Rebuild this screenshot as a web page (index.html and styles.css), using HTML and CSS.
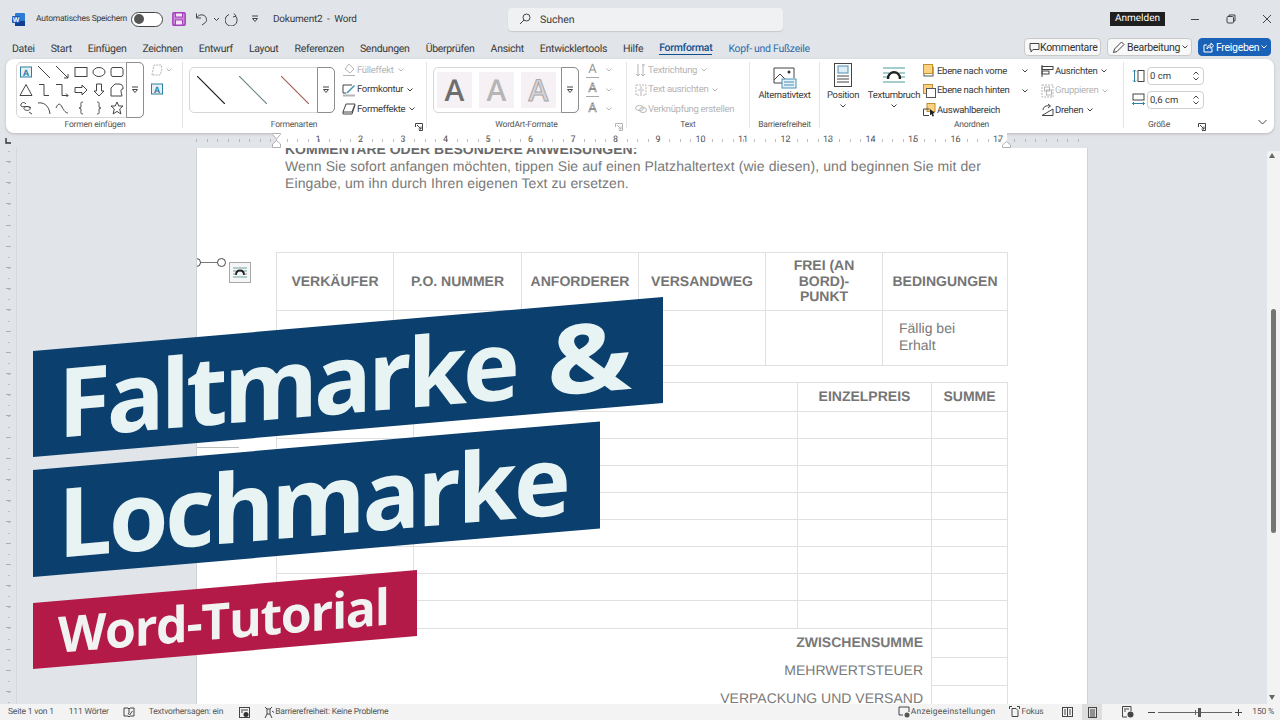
FILE: index.html
```html
<!DOCTYPE html>
<html lang="de">
<head>
    <meta charset="UTF-8">
    <title>Dokument2 - Word</title>
    <link rel="stylesheet" href="styles.css">
</head>
<body>
    <div class="titlebar">
        <svg class="word-logo" width="13" height="13" viewBox="0 0 13 13"><rect x="3" y="0" width="10" height="13" rx="1" fill="#2b7cd3"/><rect x="3" y="8" width="10" height="5" fill="#103f91"/><rect x="0" y="3" width="8" height="7" rx="1" fill="#185abd"/><text x="4" y="8.6" class="logo-w">W</text></svg>
        <span class="autosave">Automatisches Speichern</span>
        <span class="toggle"><span class="toggle-knob"></span></span>
        <svg class="qa save" width="14" height="14" viewBox="0 0 14 14"><rect x="0.8" y="0.8" width="12.4" height="12.4" rx="1" fill="#c98ad6" stroke="#a53fbc" stroke-width="1.4"/><rect x="3.5" y="1" width="7" height="4" fill="#f4e6f7" stroke="#a53fbc"/><rect x="3.5" y="8" width="7" height="5" fill="#f4e6f7" stroke="#a53fbc"/></svg>
        <svg class="qa undo" width="13" height="14" viewBox="0 0 13 14"><path class="ln" d="M1.5 1.5v4.5h4.500M1.500 6C3 3.500 5.500 2.300 8 3c3.500 1 4.500 5 2.500 7.500L7 13"/></svg>
        <svg class="qa chev" width="7" height="5" viewBox="0 0 7 5"><path class="ln" d="M1 1l2.500 2.500L6 1"/></svg>
        <svg class="qa redo" width="14" height="14" viewBox="0 0 14 14"><path class="ln" d="M9 1.500l2 2.500-3 1M10.500 4A6 6 0 1 1 4 2.500"/></svg>
        <svg class="qa custom" width="8" height="8" viewBox="0 0 8 8"><path class="ln" d="M1 1h6M1.500 3.500h5L4 6.500z"/></svg>
        <span class="doc-title">Dokument2&nbsp; - &nbsp;Word</span>
        <div class="search">
            <svg width="12" height="12" viewBox="0 0 12 12"><circle class="ln" cx="7.500" cy="4.500" r="3.500"/><path class="ln" d="M5 7l-4 4"/></svg>
            <span>Suchen</span>
        </div>
        <span class="signin">Anmelden</span>
        <div class="winctl">
            <svg width="10" height="10" viewBox="0 0 10 10"><path class="ln" d="M1 5.500h8"/></svg>
            <svg width="10" height="10" viewBox="0 0 10 10"><rect class="ln" x="1" y="2.500" width="6.500" height="6.500" rx="1"/><path class="ln" d="M3 2.500V1h6v6H7.500"/></svg>
            <svg width="10" height="10" viewBox="0 0 10 10"><path class="ln" d="M1 1l8 8M9 1l-8 8"/></svg>
        </div>
    </div>

    <div class="tabbar">
        <nav class="tabs">
            <span>Datei</span><span>Start</span><span>Einfügen</span><span>Zeichnen</span><span>Entwurf</span><span>Layout</span><span>Referenzen</span><span>Sendungen</span><span>Überprüfen</span><span>Ansicht</span><span>Entwicklertools</span><span>Hilfe</span>
            <span class="tab-active">Formformat</span><span class="tab-blue">Kopf- und Fußzeile</span>
        </nav>
        <div class="actions">
            <button class="act act-comment"><svg width="11" height="11" viewBox="0 0 11 11"><path class="ln" d="M1 1.500h9v6H4L2 10V7.500H1z"/></svg>Kommentare</button>
            <button class="act act-edit"><svg width="13" height="13" viewBox="0 0 13 13"><path class="ln" d="M1.500 11.500l1-3.500 7-7 2.500 2.500-7 7z"/></svg>Bearbeitung<svg class="act-chev" width="6" height="4" viewBox="0 0 6 4"><path class="ln" d="M0.500 0.500L3 3l2.500-2.500"/></svg></button>
            <button class="act act-share"><svg width="11" height="11" viewBox="0 0 11 11"><path class="ln-w" d="M4 3H1v7h8V6.500M4 7c0-2.500 1.500-4 4-4V1l2.500 2.800L8 6.500V4.800C6.500 4.800 5 5.500 4 7z"/></svg>Freigeben<svg class="act-chev" width="6" height="4" viewBox="0 0 6 4"><path class="ln-w" d="M0.500 0.500L3 3l2.500-2.500"/></svg></button>
        </div>
    </div>

    <div class="ribbon">
        <section class="group g-shapes">
            <div class="group-body">
                <div class="gallery shape-gallery">
                    <div class="shape-grid">
                        <svg viewBox="0 0 14 14"><rect x="1.500" y="2" width="11" height="10" fill="#e6f1f6" stroke="#2f7fa3"/><text x="7" y="10.500" class="tb-a">A</text></svg>
                        <svg viewBox="0 0 14 14"><path class="ln" d="M1 1l12 12"/></svg>
                        <svg viewBox="0 0 14 14"><path class="ln" d="M1 1l12 12M13 9v4H9"/></svg>
                        <svg viewBox="0 0 14 14"><rect class="ln" x="1" y="2.500" width="12" height="9"/></svg>
                        <svg viewBox="0 0 14 14"><ellipse class="ln" cx="7" cy="7" rx="6" ry="4.500"/></svg>
                        <svg viewBox="0 0 14 14"><rect class="ln" x="1" y="2.500" width="12" height="9" rx="2"/></svg>
                        <svg viewBox="0 0 14 14"><path class="ln" d="M7 1.500l6 11H1z"/></svg>
                        <svg viewBox="0 0 14 14"><path class="ln" d="M2 1.500h5v11h5"/></svg>
                        <svg viewBox="0 0 14 14"><path class="ln" d="M1 1.500h6v11h6M11 10.500l2 2-2 2"/></svg>
                        <svg viewBox="0 0 14 14"><path class="ln" d="M1 4.500h7V2l5 5-5 5V9.500H1z"/></svg>
                        <svg viewBox="0 0 14 14"><path class="ln" d="M4.500 1h5v7H12l-5 5-5-5h2.500z"/></svg>
                        <svg viewBox="0 0 14 14"><path class="ln" d="M1 13V5l4-4h4c3 0 4 2 4 4v1c-2 0-2 1-2 2s1 5 1 5z"/></svg>
                        <svg viewBox="0 0 14 14"><path class="ln" d="M7 3C5 0 1 2 2 5c1 2 8-1 9 2s-5 3-6 1 4-4 7-1M10 11l3 2"/></svg>
                        <svg viewBox="0 0 14 14"><path class="ln" d="M1 2c5-1 11 2 12 11"/></svg>
                        <svg viewBox="0 0 14 14"><path class="ln" d="M1 7c2-5 4-5 6-1s4 6 6 6"/></svg>
                        <svg viewBox="0 0 14 14"><path class="ln" d="M9 1C6 1 7 3 7 5S6 7 5 7c1 0 2 0 2 2s-1 4 2 4"/></svg>
                        <svg viewBox="0 0 14 14"><path class="ln" d="M5 1c3 0 2 2 2 4s1 2 2 2c-1 0-2 0-2 2s1 4-2 4"/></svg>
                        <svg viewBox="0 0 14 14"><path class="ln" d="M7 1l1.800 4h4.200L9.700 8l1.200 5L7 10.400 3.100 13l1.200-5L1 5h4.200z"/></svg>
                    </div>
                    <span class="drop drop-tall"><svg width="8" height="8" viewBox="0 0 8 8"><path class="ln" d="M1 1h6M1.500 3.500h5L4 6.500z"/></svg></span>
                </div>
                <div class="shape-side">
                    <span class="side-row"><svg width="14" height="14" viewBox="0 0 14 14"><path class="ln-dim" stroke-dasharray="2 1" d="M2 12L4 2h7l1 4-2 6z"/></svg><svg width="6" height="4" viewBox="0 0 6 4"><path class="ln-dim" d="M0.500 0.500L3 3l2.500-2.500"/></svg></span>
                    <svg width="14" height="14" viewBox="0 0 14 14"><rect x="1.500" y="2" width="11" height="10" fill="#e6f1f6" stroke="#2f7fa3"/><text x="7" y="10.500" class="tb-a">A</text></svg>
                </div>
            </div>
            <div class="group-label">Formen einfügen</div>
        </section>

        <section class="group g-styles">
            <div class="group-body">
                <div class="gallery wide-gallery">
                    <div class="line-samples">
                        <svg width="28" height="28" viewBox="0 0 28 28"><path d="M0 0l28 28" stroke="#1a1a1a" stroke-width="1.200"/></svg>
                        <svg width="28" height="28" viewBox="0 0 28 28"><path d="M0 0l28 28" stroke="#6c8384" stroke-width="1.200"/></svg>
                        <svg width="28" height="28" viewBox="0 0 28 28"><path d="M0 0l28 28" stroke="#a8605c" stroke-width="1.200"/></svg>
                    </div>
                    <span class="drop"><svg width="8" height="8" viewBox="0 0 8 8"><path class="ln" d="M1 1h6M1.500 3.500h5L4 6.500z"/></svg></span>
                </div>
                <div class="cmds">
                    <div class="cmd cmd-dim"><svg width="14" height="14" viewBox="0 0 14 14"><path class="ln-dim" d="M7 1l5 5-4 4-5-4zM1 12.500h12"/></svg>Fülleffekt<svg class="chv" width="6" height="4" viewBox="0 0 6 4"><path class="ln-dim" d="M0.500 0.500L3 3l2.500-2.500"/></svg></div>
                    <div class="cmd"><svg width="14" height="14" viewBox="0 0 14 14"><path class="ln" d="M1 2h9M1 2v8h3"/><path d="M5 9l7-7 1 1-7 7-2 .5z" fill="#3f8fb0"/><rect x="1" y="11.500" width="12" height="2" fill="#b5b5b5"/></svg>Formkontur<svg class="chv" width="6" height="4" viewBox="0 0 6 4"><path class="ln" d="M0.500 0.500L3 3l2.500-2.500"/></svg></div>
                    <div class="cmd"><svg width="14" height="14" viewBox="0 0 14 14"><path class="ln" d="M4 2h9l-3 8H1zM1 10v2h9l3-9"/></svg>Formeffekte<svg class="chv" width="6" height="4" viewBox="0 0 6 4"><path class="ln" d="M0.500 0.500L3 3l2.500-2.500"/></svg></div>
                </div>
            </div>
            <div class="group-label">Formenarten</div>
            <svg class="launcher" width="8" height="8" viewBox="0 0 8 8"><path class="ln" d="M0.500 4V0.500H7.500V7.500H4M2 2l4 4M6 3.500V6H3.500"/></svg>
        </section>

        <section class="group g-wordart">
            <div class="group-body">
                <div class="gallery wide-gallery">
                    <div class="wa-samples">
                        <span class="wa wa-dark">A</span><span class="wa wa-light">A</span><span class="wa wa-outline">A</span>
                    </div>
                    <span class="drop"><svg width="8" height="8" viewBox="0 0 8 8"><path class="ln" d="M1 1h6M1.500 3.500h5L4 6.500z"/></svg></span>
                </div>
                <div class="wa-cmds">
                    <div class="wa-cmd"><span class="wa-ic wa-ic-under">A</span><svg width="6" height="4" viewBox="0 0 6 4"><path class="ln-dim" d="M0.500 0.500L3 3l2.500-2.500"/></svg></div>
                    <div class="wa-cmd"><span class="wa-ic wa-ic-under wa-ic-hollow">A</span><svg width="6" height="4" viewBox="0 0 6 4"><path class="ln-dim" d="M0.500 0.500L3 3l2.500-2.500"/></svg></div>
                    <div class="wa-cmd"><span class="wa-ic wa-ic-hollow">A</span><svg width="6" height="4" viewBox="0 0 6 4"><path class="ln-dim" d="M0.500 0.500L3 3l2.500-2.500"/></svg></div>
                </div>
            </div>
            <div class="group-label">WordArt-Formate</div>
            <svg class="launcher" width="8" height="8" viewBox="0 0 8 8"><path class="ln-dim" d="M0.500 4V0.500H7.500V7.500H4M2 2l4 4M6 3.500V6H3.500"/></svg>
        </section>

        <section class="group g-text">
            <div class="group-body">
                <div class="cmds">
                    <div class="cmd cmd-dim"><svg width="12" height="14" viewBox="0 0 12 14"><path class="ln-dim" d="M3 1v12M1 11l2 2 2-2M8 1v12M6 11l2 2 2-2M10 2H7"/></svg>Textrichtung<svg class="chv" width="6" height="4" viewBox="0 0 6 4"><path class="ln-dim" d="M0.500 0.500L3 3l2.500-2.500"/></svg></div>
                    <div class="cmd cmd-dim"><svg width="12" height="14" viewBox="0 0 12 14"><path class="ln-dim" stroke-dasharray="2 1" d="M1 2h10v10H1z"/><path class="ln-dim" d="M6 3v3M6 8v3M3 7h6"/></svg>Text ausrichten<svg class="chv" width="6" height="4" viewBox="0 0 6 4"><path class="ln-dim" d="M0.500 0.500L3 3l2.500-2.500"/></svg></div>
                    <div class="cmd cmd-dim"><svg width="12" height="14" viewBox="0 0 12 14"><ellipse class="ln-dim" cx="4.500" cy="6" rx="4" ry="2.500"/><ellipse class="ln-dim" cx="8" cy="8" rx="3.500" ry="2.500"/></svg>Verknüpfung erstellen</div>
                </div>
            </div>
            <div class="group-label">Text</div>
        </section>

        <section class="group g-access">
            <div class="group-body big-row">
                <div class="big">
                    <svg width="24" height="22" viewBox="0 0 24 22"><path class="ln" d="M1 1h20v10M1 1v15h10"/><path class="ln" d="M1 13l6-6 5 5"/><circle cx="16" cy="5" r="1.500" fill="#333"/><rect x="9" y="12" width="14" height="9" fill="#e4f1f8" stroke="#4a90b5"/><path d="M11 15h10M11 18h10" stroke="#4a90b5"/></svg>
                    <span>Alternativtext</span>
                </div>
            </div>
            <div class="group-label">Barrierefreiheit</div>
        </section>

        <section class="group g-arrange">
            <div class="group-body big-row">
                <div class="big">
                    <svg width="20" height="24" viewBox="0 0 20 24"><rect class="ln" x="1.500" y="0.500" width="17" height="23"/><rect x="5" y="3" width="10" height="7" fill="#dfeef6" stroke="#4a90b5"/><path class="ln" d="M4 13h12M4 16h12M4 19h12"/></svg>
                    <span>Position</span>
                    <svg width="6" height="4" viewBox="0 0 6 4"><path class="ln" d="M0.500 0.500L3 3l2.500-2.500"/></svg>
                </div>
                <div class="big big-wrap">
                    <svg width="22" height="24" viewBox="0 0 22 24"><path d="M0 5h22M0 10h6M16 10h6M0 14h4M18 14h4M0 19h22" stroke="#4d9a9a"/><path d="M5 16c0-9 12-9 12 0" fill="none" stroke="#222" stroke-width="2.400"/></svg>
                    <span>Textumbruch</span>
                    <svg width="6" height="4" viewBox="0 0 6 4"><path class="ln" d="M0.500 0.500L3 3l2.500-2.500"/></svg>
                </div>
                <div class="cmds cmds-layer">
                    <div class="cmd"><svg width="13" height="14" viewBox="0 0 13 14"><rect x="1" y="3" width="9" height="9" fill="none" stroke="#555"/><rect x="0.500" y="0.500" width="9" height="9" fill="#fcd181" stroke="#c0902c"/></svg>Ebene nach vorne<svg class="chv-far" width="6" height="4" viewBox="0 0 6 4"><path class="ln" d="M0.500 0.500L3 3l2.500-2.500"/></svg></div>
                    <div class="cmd"><svg width="13" height="14" viewBox="0 0 13 14"><rect x="0.500" y="0.500" width="9" height="9" fill="#fcd181" stroke="#c0902c"/><rect x="3.500" y="4.500" width="9" height="9" fill="#fff" stroke="#555"/></svg>Ebene nach hinten<svg class="chv-far" width="6" height="4" viewBox="0 0 6 4"><path class="ln" d="M0.500 0.500L3 3l2.500-2.500"/></svg></div>
                    <div class="cmd"><svg width="13" height="14" viewBox="0 0 13 14"><rect x="4" y="0.500" width="8" height="8" fill="#fcd181" stroke="#c0902c"/><path class="ln" d="M6 12.500H0.500V6h6"/><path d="M7 6l5 4-2 .5 1 2.500-1.500.5-1-2.500-1.500 1.500z" fill="#222"/></svg>Auswahlbereich</div>
                </div>
                <div class="cmds cmds-align">
                    <div class="cmd"><svg width="13" height="14" viewBox="0 0 13 14"><path class="ln" d="M1 1v12"/><rect class="ln" x="1" y="2.500" width="11" height="3"/><rect class="ln" x="1" y="7" width="7" height="3"/></svg>Ausrichten<svg class="chv" width="6" height="4" viewBox="0 0 6 4"><path class="ln" d="M0.500 0.500L3 3l2.500-2.500"/></svg></div>
                    <div class="cmd cmd-dim"><svg width="13" height="14" viewBox="0 0 13 14"><path class="ln-dim" stroke-dasharray="2 1" d="M1 1h11v12H1z"/><rect class="ln-dim" x="3.500" y="3" width="5" height="4"/><rect class="ln-dim" x="5.500" y="6" width="5" height="5"/></svg>Gruppieren<svg class="chv" width="6" height="4" viewBox="0 0 6 4"><path class="ln-dim" d="M0.500 0.500L3 3l2.500-2.500"/></svg></div>
                    <div class="cmd"><svg width="13" height="14" viewBox="0 0 13 14"><path class="ln" d="M1 12.500h11V6zM2 7c0-3 3-5 7-4M7 1l2.500 2L7 5"/></svg>Drehen<svg class="chv" width="6" height="4" viewBox="0 0 6 4"><path class="ln" d="M0.500 0.500L3 3l2.500-2.500"/></svg></div>
                </div>
            </div>
            <div class="group-label">Anordnen</div>
        </section>

        <section class="group g-size">
            <div class="group-body size-body">
                <div class="size-row">
                    <svg width="13" height="14" viewBox="0 0 13 14"><path d="M2.500 1v12M1 2.500L2.500 1 4 2.500M1 11.500L2.500 13 4 11.500" fill="none" stroke="#2f7fa3"/><rect class="ln" x="6" y="1.500" width="6" height="11"/></svg>
                    <div class="spin"><span>0 cm</span><span class="spin-arrows"><svg width="6" height="4" viewBox="0 0 6 4"><path class="ln" d="M0.500 3.500L3 1l2.500 2.500"/></svg><svg width="6" height="4" viewBox="0 0 6 4"><path class="ln" d="M0.500 0.500L3 3l2.500-2.500"/></svg></span></div>
                </div>
                <div class="size-row">
                    <svg width="13" height="14" viewBox="0 0 13 14"><rect class="ln" x="1" y="1" width="11" height="6"/><path d="M0.500 10.500h12M2 9l-1.500 1.500L2 12M11 9l1.500 1.500L11 12" fill="none" stroke="#2f7fa3"/></svg>
                    <div class="spin"><span>0,6 cm</span><span class="spin-arrows"><svg width="6" height="4" viewBox="0 0 6 4"><path class="ln" d="M0.500 3.500L3 1l2.500 2.500"/></svg><svg width="6" height="4" viewBox="0 0 6 4"><path class="ln" d="M0.500 0.500L3 3l2.500-2.500"/></svg></span></div>
                </div>
            </div>
            <div class="group-label">Größe</div>
            <svg class="launcher" width="8" height="8" viewBox="0 0 8 8"><path class="ln" d="M0.500 4V0.500H7.500V7.500H4M2 2l4 4M6 3.500V6H3.500"/></svg>
        </section>

        <svg class="collapse" width="9" height="6" viewBox="0 0 9 6"><path class="ln" d="M0.500 1L4.500 5l4-4"/></svg>
    </div>

    <div class="hruler">
        <svg class="tab-stop" width="6" height="6" viewBox="0 0 6 6"><path d="M1 0v5h5" fill="none" stroke="#333" stroke-width="1.400"/></svg>
        <div class="hruler-track">
            <div class="hruler-white">
                <span>1</span><span>2</span><span>3</span><span>4</span><span>5</span><span>6</span><span>7</span><span>8</span><span>9</span><span>10</span><span>11</span><span>12</span><span>13</span><span>14</span><span>15</span><span>16</span><span>17</span>
            </div>
            <svg class="indent indent-left" width="9" height="15" viewBox="0 0 9 15"><path d="M0.500 0.500h8v1L4.500 6 0.500 1.500zM4.500 7.500l4 3.500v3.500h-8V11z" fill="#fff" stroke="#b0b0b0"/></svg>
            <svg class="indent indent-right" width="9" height="7" viewBox="0 0 9 7"><path d="M4.500 0.500l4 3.500v2.500h-8V4z" fill="#fff" stroke="#b0b0b0"/></svg>
        </div>
    </div>

    <div class="workspace">
        <div class="vruler"></div>
        <div class="desk">
            <div class="page">
                <p class="note-title">KOMMENTARE ODER BESONDERE ANWEISUNGEN:</p>
                <p class="note-text">Wenn Sie sofort anfangen möchten, tippen Sie auf einen Platzhaltertext (wie diesen), und beginnen Sie mit der Eingabe, um ihn durch Ihren eigenen Text zu ersetzen.</p>

                <table class="order-table">
                    <colgroup><col class="c1"><col class="c2"><col class="c3"><col class="c4"><col class="c5"><col class="c6"></colgroup>
                    <tr class="order-head">
                        <th>VERKÄUFER</th><th>P.O. NUMMER</th><th>ANFORDERER</th><th>VERSANDWEG</th><th class="free-point">FREI (AN BORD)-PUNKT</th><th>BEDINGUNGEN</th>
                    </tr>
                    <tr class="order-row">
                        <td></td><td></td><td></td><td></td><td></td><td class="terms">Fällig bei Erhalt</td>
                    </tr>
                </table>

                <table class="items-table">
                    <colgroup><col class="i1"><col class="i2"><col class="i3"><col class="i4"></colgroup>
                    <tr class="items-head"><th></th><th></th><th>EINZELPREIS</th><th>SUMME</th></tr>
                    <tr><td></td><td></td><td></td><td></td></tr>
                    <tr><td></td><td></td><td></td><td></td></tr>
                    <tr><td></td><td></td><td></td><td></td></tr>
                    <tr><td></td><td></td><td></td><td></td></tr>
                    <tr><td></td><td></td><td></td><td></td></tr>
                    <tr><td></td><td></td><td></td><td></td></tr>
                    <tr><td></td><td></td><td></td><td></td></tr>
                    <tr class="items-last"><td></td><td></td><td></td><td></td></tr>
                    <tr class="total"><td class="no-line" colspan="3"><b>ZWISCHENSUMME</b></td><td></td></tr>
                    <tr class="total"><td class="no-line" colspan="3">MEHRWERTSTEUER</td><td></td></tr>
                    <tr class="total"><td class="no-line" colspan="3">VERPACKUNG UND VERSAND</td><td></td></tr>
                </table>

                <div class="handle-line"></div>
                <span class="handle handle-a"></span>
                <span class="handle handle-b"></span>
                <div class="layout-btn"><svg width="16" height="16" viewBox="0 0 16 16"><path d="M1 3h14M1 6h3M12 6h3M1 9h2M13 9h2M1 12h14" stroke="#6aa5a5"/><path d="M4 10c0-6 8-6 8 0" fill="none" stroke="#222" stroke-width="1.800"/></svg></div>
                <div class="stray-line"></div>
            </div>
        </div>
        <div class="scrollbar">
            <span class="scroll-up"></span>
            <span class="thumb"></span>
            <span class="scroll-down"></span>
        </div>
    </div>

    <div class="statusbar">
        <span class="st st-pages">Seite 1 von 1</span>
        <span class="st st-words">111 Wörter</span>
        <svg class="st-book" width="12" height="11" viewBox="0 0 12 11"><path class="ln" d="M1 1h4l1 1 1-1h4v8H7l-1 1-1-1H1zM6 2v4M5 6l1.500 2 3-4"/></svg>
        <span class="st st-predict">Textvorhersagen: ein</span>
        <svg class="st-macro" width="11" height="11" viewBox="0 0 11 11"><rect class="ln" x="0.500" y="0.500" width="10" height="10"/><path class="ln" d="M2 3h7M2 5h2"/><circle cx="7" cy="7.500" r="2.500" fill="#333"/></svg>
        <svg class="st-access" width="12" height="13" viewBox="0 0 12 13"><path class="ln" d="M2 1l2 2h3l2-2M4 3v5l-2 4M7 3v5l2 4M4 8h3M9 5l2 1.500"/></svg>
        <span class="st">Barrierefreiheit: Keine Probleme</span>
        <span class="st-spacer"></span>
        <svg class="st-display" width="13" height="12" viewBox="0 0 13 12"><path class="ln" d="M5 9H1V1h10v5"/><circle cx="9" cy="9" r="2.500" fill="#555"/></svg>
        <span class="st st-display-text">Anzeigeeinstellungen</span>
        <svg class="st-focus" width="11" height="12" viewBox="0 0 11 12"><path class="ln" d="M3 2.500h4l2 2v6H3zM0.500 3V0.500H3M8 0.500h2.500V3"/></svg>
        <span class="st st-focus-text">Fokus</span>
        <svg class="st-view st-read" width="11" height="10" viewBox="0 0 11 10"><rect class="ln" x="0.500" y="0.500" width="10" height="9"/><path class="ln" d="M5.500 0.500v9M2 3h2M2 5h2M2 7h2M7 3h2M7 5h2M7 7h2"/></svg>
        <span class="st-print"><svg width="9" height="11" viewBox="0 0 9 11"><rect class="ln" x="0.500" y="0.500" width="8" height="10"/><path class="ln" d="M2 3h5M2 5h5M2 7h5M2 9h5"/></svg></span>
        <svg class="st-view st-web" width="12" height="12" viewBox="0 0 12 12"><path class="ln" d="M5 11H0.500V0.500H9V5M2 3h5M2 5h2"/><circle cx="8.500" cy="8.500" r="3" fill="#444"/></svg>
        <div class="zoom">
            <svg width="7" height="7" viewBox="0 0 7 7"><path class="ln" d="M0 3.500h7"/></svg>
            <div class="zoom-track"><span class="zoom-center"></span><span class="zoom-thumb"></span></div>
            <svg width="7" height="7" viewBox="0 0 7 7"><path class="ln" d="M0 3.500h7M3.500 0v7"/></svg>
        </div>
        <span class="st st-percent">150 %</span>
    </div>

    <div class="banner banner-one"><span>Faltmarke</span> <span class="amp">&amp;</span></div>
    <div class="banner banner-two"><span>Lochmarke</span></div>
    <div class="banner banner-three"><span>Word-Tutorial</span></div>
</body>
</html>
```

FILE: styles.css
```css
* {
    box-sizing: border-box;
}
html, body {
    margin: 0;
    padding: 0;
}
body {
    position: relative;
    width: 1280px;
    height: 720px;
    overflow: hidden;
    display: flex;
    flex-direction: column;
    background-color: #e1e4e8;
    color: #3a3a3a;
    font-family: Roboto, sans-serif;
    font-size: 9.5px;
    text-rendering: geometricPrecision;
}
svg {
    display: block;
    flex: none;
}
.ln {
    fill: none;
    stroke: #444;
    stroke-width: 1;
}
.ln-dim {
    fill: none;
    stroke: #b5b5b5;
    stroke-width: 1;
}
.ln-w {
    fill: none;
    stroke: #fff;
    stroke-width: 1;
}

/* title bar */
.titlebar {
    height: 38px;
    flex: none;
    display: flex;
    align-items: center;
    padding-left: 12px;
}
.logo-w {
    font-family: "Liberation Sans", sans-serif;
    font-size: 7px;
    font-weight: bold;
    fill: #fff;
    text-anchor: middle;
}
.autosave {
    margin-left: 11px;
    width: 95px;
    font-size: 8.500px;
    letter-spacing: -0.250px;
    white-space: nowrap;
}
.toggle {
    width: 32px;
    height: 15px;
    border: 1px solid #444;
    border-radius: 8px;
    background-color: #fff;
    display: flex;
    align-items: center;
    padding-left: 2px;
}
.toggle-knob {
    width: 10px;
    height: 10px;
    border-radius: 50%;
    background-color: #555;
}
.save {
    margin-left: 9px;
}
.undo {
    margin-left: 9px;
}
.chev {
    margin-left: 5px;
}
.redo {
    margin-left: 5px;
}
.custom {
    margin-left: 12px;
}
.doc-title {
    margin-left: 14px;
    width: 235px;
    font-size: 10px;
    letter-spacing: -0.200px;
    white-space: nowrap;
}
.search {
    width: 275px;
    height: 23px;
    display: flex;
    align-items: center;
    gap: 9px;
    padding-left: 11px;
    background-color: #f0f1f3;
    border-radius: 4px;
    box-shadow: 0 1px 1px #c8c8c8;
    font-size: 10.500px;
}
.signin {
    margin-left: 327px;
    width: 55px;
    height: 14px;
    line-height: 14px;
    text-align: center;
    background-color: #1f1f1f;
    color: #fff;
    font-size: 10px;
}
.winctl {
    margin-left: 25px;
    display: flex;
    gap: 26px;
}

/* tabs row */
.tabbar {
    height: 21px;
    flex: none;
    display: flex;
    justify-content: space-between;
    padding: 0 9px 0 12px;
}
.tabs {
    display: flex;
    gap: 16px;
    align-items: center;
    height: 20px;
    font-size: 10.500px;
    letter-spacing: -0.300px;
    white-space: nowrap;
}
.tab-active {
    color: #10508f;
    font-weight: 500;
    border-bottom: 1px solid #10508f;
}
.tab-blue {
    color: #2f6cae;
}
.actions {
    display: flex;
    gap: 6px;
    height: 18px;
}
.act {
    display: flex;
    align-items: center;
    gap: 2px;
    height: 18px;
    padding: 0 4px;
    border: 1px solid #c9c9c9;
    border-radius: 4px;
    background-color: #f8f8f8;
    color: #333;
    font-family: Roboto, sans-serif;
    font-size: 10.500px;
    letter-spacing: -0.300px;
}
.act-comment {
    width: 77px;
    gap: 0;
}
.act-edit {
    width: 85px;
}
.act-share {
    width: 73px;
    background-color: #1a62b8;
    border-color: #1a62b8;
    color: #fff;
}
.act-chev {
    margin-left: auto;
}

/* ribbon */
.ribbon {
    position: relative;
    height: 74px;
    flex: none;
    margin: 0 6px;
    display: flex;
    background-color: #fff;
    border-radius: 8px;
    box-shadow: 0 1px 3px #b9b9b9;
}
.group {
    position: relative;
    display: flex;
    flex-direction: column;
    border-right: 1px solid #e4e4e4;
    margin: 3px 0 5px;
}
.group-body {
    flex: 1;
    display: flex;
    min-height: 0;
}
.group-label {
    height: 15px;
    margin-bottom: -5px;
    text-align: center;
    font-size: 8.500px;
    letter-spacing: -0.200px;
    line-height: 15px;
    color: #555;
    white-space: nowrap;
}
.launcher {
    position: absolute;
    right: 3px;
    bottom: -3px;
}
.g-shapes { width: 177px; }
.g-styles { width: 244px; }
.g-wordart { width: 200px; }
.g-text { width: 123px; }
.g-access { width: 70px; }
.g-arrange { width: 304px; }
.g-size { width: 85px; border-right: 0; }
.g-shapes .group-label { width: 178px; }
.g-styles .group-label { width: 222px; }
.gallery {
    display: flex;
    border: 1px solid #d6d6d6;
    border-radius: 5px;
}
.drop {
    width: 18px;
    display: flex;
    align-items: center;
    justify-content: center;
    border: 1px solid #8f8f8f;
    border-radius: 0 5px 5px 0;
    margin: -1px;
}
.shape-gallery {
    margin-left: 10px;
    width: 128px;
    height: 56px;
}
.shape-grid {
    width: 110px;
    display: grid;
    grid-template-columns: repeat(6, 18.200px);
    grid-auto-rows: 18px;
    align-items: center;
    justify-items: center;
}
.shape-grid svg {
    width: 14px;
    height: 14px;
}
.tb-a {
    font-family: "Liberation Sans", sans-serif;
    font-size: 9px;
    font-weight: bold;
    fill: #2f7fa3;
    text-anchor: middle;
}
.shape-side {
    margin-left: 6px;
    display: flex;
    flex-direction: column;
    gap: 5px;
    padding-top: 1px;
}
.side-row {
    display: flex;
    align-items: center;
    gap: 2px;
}
.wide-gallery {
    margin: 5px 0 0 6px;
    width: 146px;
    height: 46px;
}
.line-samples {
    flex: 1;
    display: flex;
    align-items: center;
    gap: 14px;
    padding-left: 7px;
}
.cmds {
    display: flex;
    flex-direction: column;
    gap: 3.500px;
    margin-left: 7px;
    font-size: 9.500px;
    letter-spacing: -0.300px;
    white-space: nowrap;
}
.cmd {
    height: 16px;
    display: flex;
    align-items: center;
    gap: 1px;
}
.cmd-dim {
    color: #b5b5b5;
}
.chv {
    margin-left: 3px;
}
.wa-samples {
    flex: 1;
    display: flex;
    align-items: center;
    gap: 7px;
    padding-left: 3px;
}
.wa {
    width: 35px;
    height: 36px;
    background-color: #f5f1f5;
    text-align: center;
    font-family: "Open Sans", sans-serif;
    font-weight: 600;
    font-size: 30px;
    line-height: 36px;
}
.wa-dark {
    color: #6e6e6e;
}
.wa-light {
    color: #b5b5b5;
}
.wa-outline {
    color: #d8d3d8;
    -webkit-text-stroke: 1px #a8a8a8;
}
.wa-cmds {
    margin-left: 6px;
    padding-left: 1px;
    display: flex;
    flex-direction: column;
    gap: 3.500px;
}
.wa-cmd {
    height: 16px;
    display: flex;
    align-items: center;
    gap: 7px;
}
.wa-ic {
    width: 13px;
    text-align: center;
    color: #999;
    font-size: 13px;
    line-height: 14px;
}
.wa-ic-under {
    border-bottom: 1px solid #aaa;
}
.wa-ic-hollow {
    color: #eee;
    -webkit-text-stroke: 0.600px #888;
}
.g-text .cmds {
    margin-left: 8px;
}
.big-row {
    padding-top: 1px;
}
.big {
    display: flex;
    flex-direction: column;
    align-items: center;
    gap: 3px;
    font-size: 9.500px;
    letter-spacing: -0.300px;
    white-space: nowrap;
}
.g-access .big {
    width: 69px;
    padding-top: 4px;
    gap: 1px;
}
.g-arrange .big {
    width: 46px;
}
.big-wrap {
    margin-left: 2px;
}
.g-arrange .big-wrap {
    width: 52px;
}
.cmds-layer {
    margin-left: 3px;
    width: 117px;
}
.chv-far {
    margin: 0 12px 0 auto;
}
.cmds-align {
    margin-left: 1px;
}
.size-body {
    flex-direction: column;
    gap: 6px;
    padding: 5px 0 0 8px;
}
.size-row {
    display: flex;
    align-items: center;
    gap: 2px;
}
.spin {
    width: 57px;
    height: 18px;
    display: flex;
    align-items: center;
    justify-content: space-between;
    padding: 0 4px 0 2px;
    border: 1px solid #cfcfcf;
    border-radius: 4px;
    font-size: 9.500px;
}
.spin-arrows {
    display: flex;
    flex-direction: column;
    gap: 2px;
}
.g-size .group-label {
    width: 70px;
}
.collapse {
    position: absolute;
    right: 7px;
    bottom: 8px;
}

/* horizontal ruler */
.hruler {
    height: 15px;
    flex: none;
    display: flex;
    align-items: center;
    padding-left: 5px;
}
.tab-stop {
    margin-right: 185px;
}
.hruler-track {
    position: relative;
    width: 892px;
    height: 15px;
    padding: 0 81px 0 80px;
    background-image: repeating-linear-gradient(90deg, #b5b8bb 0 1px, transparent 1px 10.625px);
    background-size: 100% 3px;
    background-position: 0 6px;
    background-repeat: no-repeat;
}
.hruler-white {
    height: 15px;
    padding-left: 20.750px;
    display: flex;
    background-color: #fff;
    background-image: repeating-linear-gradient(90deg, #bdbdbd 0 1px, transparent 1px 10.625px);
    background-size: 100% 3px;
    background-position: 0 6px;
    background-repeat: no-repeat;
    font-size: 9px;
    line-height: 15px;
    color: #555;
}
.hruler-white span {
    flex: none;
    width: 42.500px;
    text-align: center;
}
.indent {
    position: absolute;
}
.indent-left {
    left: 76px;
    top: 0;
}
.indent-right {
    left: 806px;
    top: 8px;
}

/* document area */
.workspace {
    flex: 1;
    min-height: 0;
    display: flex;
}
.vruler {
    width: 17px;
    flex: none;
    border-right: 1px solid #d5d8dc;
    background-image:
        repeating-linear-gradient(180deg, #b0b0b0 0 1px, transparent 1px 21.200px),
        repeating-linear-gradient(180deg, #c0c0c0 0 1px, transparent 1px 10.600px);
    background-size: 5px 100%, 2px 100%;
    background-position: 6px 13px, 8px 3px;
    background-repeat: no-repeat;
}
.desk {
    flex: 1;
    min-width: 0;
    padding-left: 179px;
    overflow: hidden;
}
.page {
    position: relative;
    width: 892px;
    height: 556px;
    background-color: #fff;
    border-left: 1px solid #d0d3d6;
    border-right: 1px solid #d0d3d6;
    overflow: hidden;
    padding-left: 79px;
    font-family: "Liberation Sans", sans-serif;
    color: #797979;
    font-size: 14px;
}
.note-title {
    margin: -7px 0 0 9px;
    font-weight: bold;
    line-height: 17px;
    color: #6a6a6a;
}
.note-text {
    margin: 0 0 0 9px;
    width: 712px;
    line-height: 17px;
    letter-spacing: 0.090px;
}
table {
    border-collapse: collapse;
    table-layout: fixed;
    width: 731px;
}
td, th {
    border: 1px solid #e0e0e0;
    padding: 0;
    text-align: center;
}
th {
    font-weight: bold;
    line-height: 15.500px;
    color: #757575;
}
.order-table {
    margin-top: 60px;
}
.c1 { width: 117px; }
.c2 { width: 128px; }
.c3 { width: 117px; }
.c4 { width: 127px; }
.c5 { width: 117px; }
.c6 { width: 125px; }
.order-head {
    height: 58px;
}
.order-head .free-point {
    padding: 0 18px;
}
.order-row {
    height: 55px;
}
.terms {
    text-align: left;
    padding: 0 24px 2px 16px;
    line-height: 17px;
}
.items-table {
    margin-top: 16px;
}
.items-table tr {
    height: 27px;
}
.items-table .items-head {
    height: 29px;
}
.items-table .items-last {
    height: 28px;
}
.i1 { width: 137px; }
.i2 { width: 384px; }
.i3 { width: 134px; }
.i4 { width: 76px; }
.items-table .total {
    height: 28.500px;
}
.total .no-line {
    border: 0;
    text-align: right;
    padding: 0 8px 3px 0;
}
.handle-line {
    position: absolute;
    left: 0;
    top: 114px;
    width: 25px;
    height: 1px;
    background-color: #777;
}
.handle {
    position: absolute;
    top: 110px;
    width: 9px;
    height: 9px;
    border: 1px solid #444;
    border-radius: 50%;
    background-color: #fff;
}
.handle-a {
    left: -5px;
}
.handle-b {
    left: 20px;
}
.layout-btn {
    position: absolute;
    left: 32px;
    top: 114px;
    width: 22px;
    height: 21px;
    display: flex;
    align-items: center;
    justify-content: center;
    border: 1px solid #a8a8a8;
    background-color: #f6f6f6;
}
.stray-line {
    position: absolute;
    left: 0;
    top: 299px;
    width: 42px;
    height: 1px;
    background-color: #bdbdbd;
}
.scrollbar {
    position: relative;
    width: 13px;
    flex: none;
    margin-top: 3px;
    border-radius: 4px 0 0 0;
    background-color: #f3f3f3;
}
.scroll-up {
    position: absolute;
    left: 2px;
    top: 2px;
    border-style: solid;
    border-width: 0 3.500px 5px;
    border-color: transparent transparent #666;
}
.thumb {
    position: absolute;
    left: 4px;
    top: 158px;
    width: 5px;
    height: 224px;
    border-radius: 3px;
    background-color: #757575;
}
.scroll-down {
    position: absolute;
    left: 2px;
    bottom: 4px;
    border-style: solid;
    border-width: 5px 3.500px 0;
    border-color: #666 transparent transparent;
}

/* status bar */
.statusbar {
    height: 16px;
    flex: none;
    display: flex;
    align-items: center;
    padding: 0 6px 0 8px;
    background-color: #f3f3f3;
    font-size: 8.500px;
    letter-spacing: -0.200px;
    white-space: nowrap;
    color: #555;
}
.st-words {
    margin-left: 15px;
}
.st-book {
    margin-left: 14px;
}
.st-predict {
    margin-left: 14px;
}
.st-macro {
    margin-left: 16px;
}
.st-access {
    margin: 0 0 0 13px;
}
.st-spacer {
    flex: 1;
}
.st-display-text {
    letter-spacing: 0.200px;
}
.st-focus {
    margin: 0 1px 0 14px;
}
.st-read {
    margin-left: 19px;
}
.st-print {
    width: 20px;
    height: 16px;
    margin-left: 9px;
    display: flex;
    align-items: center;
    justify-content: center;
    background-color: #dedede;
}
.st-web {
    margin-left: 20px;
}
.zoom {
    margin-left: 14px;
    display: flex;
    align-items: center;
    gap: 1px;
}
.zoom-track {
    position: relative;
    width: 74px;
    height: 1px;
    margin: 0 2px;
    background-color: #666;
}
.zoom-center {
    position: absolute;
    left: 37px;
    top: -2px;
    width: 1px;
    height: 5px;
    background-color: #666;
}
.zoom-thumb {
    position: absolute;
    left: 40px;
    top: -4px;
    width: 3px;
    height: 9px;
    background-color: #555;
}
.st-percent {
    margin-left: 10px;
}

/* thumbnail banners over the window */
.banner {
    position: absolute;
    left: 33px;
    transform: skewY(-4.900deg);
    transform-origin: left top;
    font-family: "Open Sans", sans-serif;
    font-weight: bold;
    white-space: nowrap;
    color: #e7f4f3;
    background-color: #0a3f6e;
}
.banner-one {
    top: 351px;
    width: 630px;
    height: 106px;
    padding-left: 25px;
    font-size: 96px;
    line-height: 106px;
    letter-spacing: -4px;
    word-spacing: 10px;
}
.amp {
    display: inline-block;
    transform: scaleX(1.180);
    transform-origin: left center;
}
.banner-two {
    top: 470px;
    width: 567px;
    height: 107px;
    padding-left: 25px;
    font-size: 96px;
    line-height: 107px;
    letter-spacing: -3.200px;
}
.banner-three {
    top: 603px;
    width: 384px;
    height: 66px;
    padding-left: 25px;
    font-size: 50px;
    line-height: 66px;
    letter-spacing: -1.300px;
    color: #f1f3f3;
    background-color: #b31a47;
}
```
